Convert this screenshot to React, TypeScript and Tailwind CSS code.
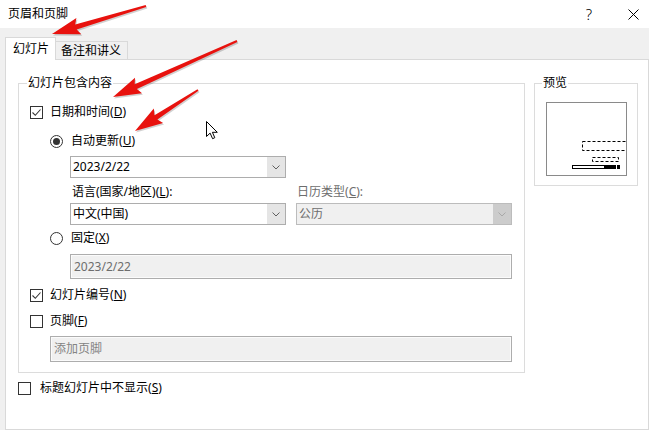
import React from "react";

function Check({ checked }: { checked?: boolean }) {
  return (
    <span className="w-[13px] h-[13px] border border-[#333333] bg-white flex items-center justify-center shrink-0">
      {checked && (
        <svg width="11" height="11" viewBox="0 0 11 11">
          <path d="M1.5 5.5 L4.3 8.3 L9.5 2.5" fill="none" stroke="#333333" strokeWidth="1.1" />
        </svg>
      )}
    </span>
  );
}

function Radio({ checked }: { checked?: boolean }) {
  return (
    <span className="w-[13px] h-[13px] rounded-full border border-[#333333] bg-white flex items-center justify-center shrink-0">
      {checked && <span className="w-[7px] h-[7px] rounded-full bg-[#333333]" />}
    </span>
  );
}

function Key({ k }: { k: string }) {
  return (
    <>
      (<span className="underline underline-offset-1">{k}</span>)
    </>
  );
}

function Combo({ value, disabled }: { value: string; disabled?: boolean }) {
  return (
    <div
      className={
        disabled
          ? "w-[216px] h-[22px] border border-[#bcbcbc] bg-[#f0f0f0] flex text-[#6d6d6d]"
          : "w-[216px] h-[22px] border border-[#adadad] bg-white flex"
      }
    >
      <div className="flex-1 flex items-center pl-[2px]">{value}</div>
      <div
        className={
          disabled
            ? "w-[18px] bg-[#cccccc] flex items-center justify-center"
            : "w-[18px] bg-[#e5e5e5] flex items-center justify-center"
        }
      >
        <svg width="8" height="5" viewBox="0 0 8 5">
          <path d="M0.5 0.5 L4 4 L7.5 0.5" fill="none" stroke={disabled ? "#a8a8a8" : "#606060"} strokeWidth="1" />
        </svg>
      </div>
    </div>
  );
}

function arrowPoints(x1: number, y1: number, x2: number, y2: number) {
  const dx = x2 - x1;
  const dy = y2 - y1;
  const len = Math.hypot(dx, dy);
  const ux = dx / len;
  const uy = dy / len;
  const nx = -uy;
  const ny = ux;
  const L = 25;
  const W = 8.5;
  const bx = x2 - ux * L;
  const by = y2 - uy * L;
  const p = (x: number, y: number) => `${x.toFixed(1)},${y.toFixed(1)}`;
  return [
    p(x1 + nx * 1, y1 + ny * 1),
    p(bx + nx * 2.6, by + ny * 2.6),
    p(bx - ux * 3 + nx * W, by - uy * 3 + ny * W),
    p(x2, y2),
    p(bx - ux * 3 - nx * W, by - uy * 3 - ny * W),
    p(bx - nx * 2.6, by - ny * 2.6),
    p(x1 - nx * 1, y1 - ny * 1),
  ].join(" ");
}

const arrows = [
  [146, 6, 52, 34],
  [237, 41, 113, 97],
  [198, 90, 135, 131],
];

export default function App() {
  return (
    <div className="relative w-[649px] h-[430px] overflow-hidden bg-white text-[12px] leading-[16px] text-black font-['Noto_Sans','Noto_Sans_CJK_SC',sans-serif]">
      {/* title bar */}
      <div className="h-[28px] flex items-center pl-[8px]">
        <span className="flex-1">页眉和页脚</span>
        <span className="w-[12px] text-center mr-[33px] text-[15px] font-light">?</span>
        <svg width="11" height="11" viewBox="0 0 11 11" className="mr-[10px]">
          <path d="M0.5 0.5 L10.5 10.5 M10.5 0.5 L0.5 10.5" stroke="#000" strokeWidth="1" />
        </svg>
      </div>

      {/* body */}
      <div className="bg-[#f0f0f0] h-[402px] pt-[9px] pl-[5px] flex flex-col">
        <div className="flex items-end relative z-10">
          <div className="w-[51px] h-[23px] -mb-px bg-white border-x border-t border-[#d9d9d9] pl-[7px] pt-[3px]">
            幻灯片
          </div>
          <div className="w-[72px] h-[18px] bg-[#f0f0f0] border-r border-t border-[#d9d9d9] pl-[5px] pt-[1px]">
            备注和讲义
          </div>
        </div>

        <div className="flex-1 bg-white border border-[#d9d9d9] flex">
          {/* left column */}
          <div className="ml-[12px] w-[507px] flex flex-col">
            <div className="relative mt-[23px] h-[290px] border border-[#dcdcdc] flex flex-col">
              <span className="absolute left-[8px] top-[-9px] bg-white px-[1px]">幻灯片包含内容</span>

              <div className="mt-[20px] ml-[11px] h-[16px] flex items-center gap-[7px]">
                <Check checked />
                <span>
                  日期和时间<Key k="D" />
                </span>
              </div>

              <div className="mt-[13px] ml-[31px] h-[16px] flex items-center gap-[8px]">
                <Radio checked />
                <span>
                  自动更新<Key k="U" />
                </span>
              </div>

              <div className="mt-[7px] ml-[51px]">
                <Combo value="2023/2/22" />
              </div>

              <div className="mt-[6px] ml-[51px] h-[16px] flex">
                <span className="w-[226px] pl-[2px]">
                  语言(国家/地区)<Key k="L" />:
                </span>
                <span className="pl-[1px] text-[#6d6d6d]">
                  日历类型<Key k="C" />:
                </span>
              </div>

              <div className="mt-[3px] ml-[51px] flex gap-[10px]">
                <Combo value="中文(中国)" />
                <Combo value="公历" disabled />
              </div>

              <div className="mt-[5px] ml-[31px] h-[16px] flex items-center gap-[8px]">
                <Radio />
                <span>
                  固定<Key k="X" />
                </span>
              </div>

              <div className="mt-[8px] ml-[51px] w-[442px] h-[25px] border border-[#adadad] bg-[#f0f0f0] shadow-[inset_0_0_0_1px_#fbfbfb] flex items-center pl-[3px] text-[#6d6d6d]">
                2023/2/22
              </div>

              <div className="mt-[8px] ml-[11px] h-[16px] flex items-center gap-[7px]">
                <Check checked />
                <span>
                  幻灯片编号<Key k="N" />
                </span>
              </div>

              <div className="mt-[10px] ml-[11px] h-[16px] flex items-center gap-[7px]">
                <Check />
                <span>
                  页脚<Key k="F" />
                </span>
              </div>

              <div className="mt-[7px] ml-[31px] w-[462px] h-[26px] border border-[#adadad] bg-[#f0f0f0] shadow-[inset_0_0_0_1px_#fbfbfb] flex items-center pl-[3px] text-[#838383]">
                添加页脚
              </div>
            </div>

            <div className="mt-[7px] h-[16px] flex items-center gap-[9px]">
              <Check />
              <span>
                标题幻灯片中不显示<Key k="S" />
              </span>
            </div>
          </div>

          {/* preview column */}
          <div className="ml-[9px] w-[104px]">
            <div className="relative mt-[23px] h-[103px] border border-[#dcdcdc]">
              <span className="absolute left-[7px] top-[-9px] bg-white px-[1px]">预览</span>
              <div className="ml-[11px] mt-[18px] w-[81px] h-[74px] border border-[#8a8a8a] bg-white">
                <svg width="79" height="72" viewBox="0 0 79 72">
                  <rect x="35.5" y="38.5" width="44" height="9" fill="none" stroke="#000" strokeWidth="1" strokeDasharray="3 2" />
                  <rect x="45.5" y="54.5" width="26" height="4" fill="none" stroke="#000" strokeWidth="1" strokeDasharray="3 2" />
                  <rect x="25.5" y="62.5" width="32" height="3" fill="#fff" stroke="#000" strokeWidth="1" />
                  <rect x="58" y="62" width="11" height="4" fill="#000" />
                  <rect x="70" y="62" width="3" height="4" fill="#000" />
                </svg>
              </div>
            </div>
          </div>
        </div>
      </div>

      {/* annotation overlay */}
      <svg className="absolute inset-0 pointer-events-none" width="649" height="430" viewBox="0 0 649 430">
        {arrows.map(([a, b, c, d], i) => (
          <g key={i}>
            <polygon points={arrowPoints(a + 1, b + 1.5, c + 1, d + 1.5)} fill="#000" opacity="0.18" />
            <polygon points={arrowPoints(a, b, c, d)} fill="#e8120e" />
          </g>
        ))}
        <path
          d="M0 0 V15 L3.6 11.6 L6.1 17.2 L8.3 16.2 L5.9 10.8 H10.8 Z"
          transform="translate(206.5 121.5)"
          fill="#fff"
          stroke="#000"
          strokeWidth="1"
          strokeLinejoin="round"
        />
      </svg>
    </div>
  );
}
